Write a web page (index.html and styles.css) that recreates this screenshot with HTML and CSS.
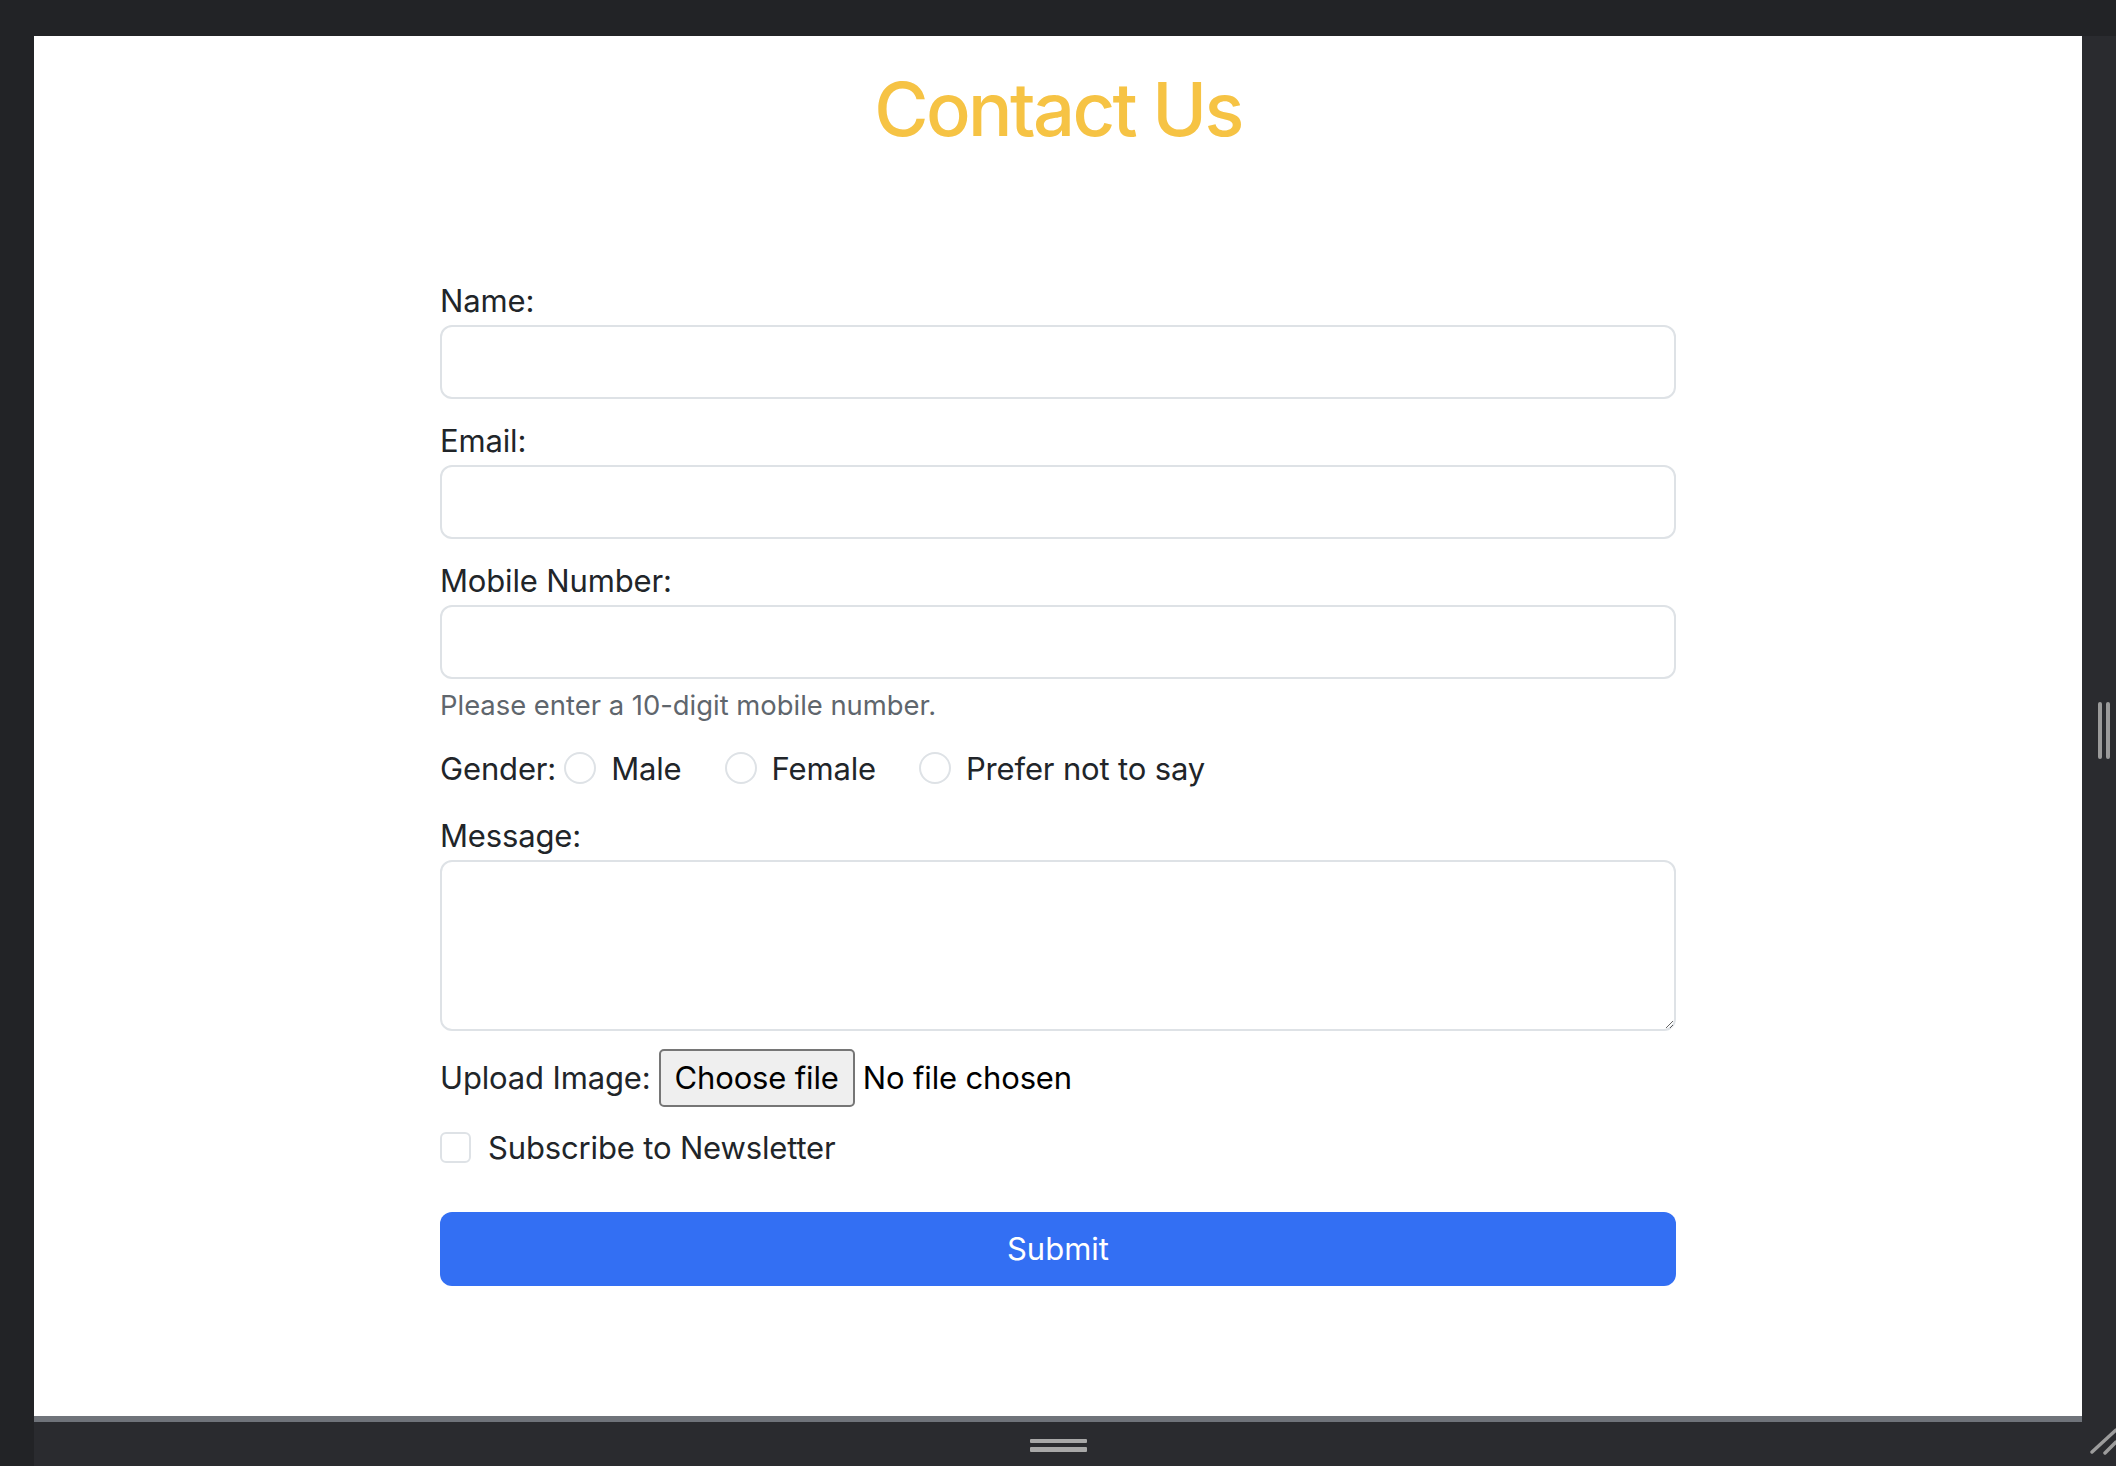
FILE: index.html
```html
<!DOCTYPE html>
<html lang="en">
<head>
<meta charset="utf-8">
<title>Contact Us</title>
<link rel="stylesheet" href="styles.css">
</head>
<body>
<div class="window">
  <div class="topbar"></div>
  <div class="leftbar"></div>
  <main class="page">
    <h1 class="title">Contact Us</h1>
    <form class="form">
      <div class="group">
        <label class="label" for="name">Name:</label>
        <input class="control" id="name" type="text">
      </div>
      <div class="group">
        <label class="label" for="email">Email:</label>
        <input class="control" id="email" type="email">
      </div>
      <div class="group group-help">
        <label class="label" for="mobile">Mobile Number:</label>
        <input class="control" id="mobile" type="tel">
        <div class="help">Please enter a 10-digit mobile number.</div>
      </div>
      <div class="gender-row">
        <span class="inline-label">Gender:</span>
        <label class="radio-item"><input class="radio" type="radio" name="gender"><span>Male</span></label>
        <label class="radio-item"><input class="radio" type="radio" name="gender"><span>Female</span></label>
        <label class="radio-item"><input class="radio" type="radio" name="gender"><span>Prefer not to say</span></label>
      </div>
      <div class="group">
        <label class="label" for="message">Message:</label>
        <textarea class="control textarea" id="message"></textarea>
      </div>
      <div class="upload-row">
        <span class="inline-label">Upload Image:</span>
        <span class="file-btn">Choose file</span>
        <span class="file-status">No file chosen</span>
      </div>
      <label class="check-row"><input class="check" type="checkbox"><span>Subscribe to Newsletter</span></label>
      <button class="submit" type="button">Submit</button>
    </form>
  </main>
  <div class="rightbar"><span class="vgrip"></span><span class="vgrip"></span></div>
  <div class="grayline"></div>
  <div class="bottombar">
    <div class="hgrip"><span></span><span></span></div>
    <svg class="corner" width="26" height="34" viewBox="0 0 26 34"><path d="M2 24 L26 2 M15 25 L26 14" stroke="#9c9c9c" stroke-width="3.5" stroke-linecap="round" fill="none"/></svg>
  </div>
</div>
</body>
</html>
```
FILE: styles.css
```css
* { box-sizing: border-box; }
html, body { margin: 0; padding: 0; }
body {
  background: #222326;
  font-family: "Inter", "Noto Sans", "Liberation Sans", sans-serif;
  color: #212529;
}
.window {
  display: grid;
  grid-template-columns: 34px 1fr 34px;
  grid-template-rows: 36px 1380px 6px 44px;
  width: 2116px;
  height: 1466px;
}
.topbar { grid-column: 1 / -1; grid-row: 1; background: #222326; }
.leftbar { grid-column: 1; grid-row: 2 / -1; background: #222326; }
.page {
  grid-column: 2; grid-row: 2;
  background: #ffffff;
  padding-top: 28px;
  display: flex; flex-direction: column; align-items: center;
}
.rightbar {
  grid-column: 3; grid-row: 2 / 4;
  background: #2a2b2f;
  display: flex; align-items: center; justify-content: center;
  gap: 4px; padding-left: 10px; padding-top: 2px;
}
.vgrip { width: 4px; height: 57px; border-radius: 2px; background: #9a9a9a; }
.grayline { grid-column: 2; grid-row: 3; background: #6f737a; }
.bottombar {
  grid-column: 2 / 4; grid-row: 4;
  background: #2a2b2f;
  display: flex; align-items: center; position: relative;
}
.hgrip {
  flex: 1; display: flex; flex-direction: column; align-items: center; gap: 4px;
  padding-left: 0; padding-top: 2px;
}
.hgrip span { width: 57px; height: 4.5px; border-radius: 1px; background: #a8a8a8; }
.corner { flex: none; align-self: flex-end; margin-right: 0; margin-bottom: 4px; margin-left: 8px; }

.title {
  margin: 0;
  font-size: 74px;
  line-height: 91px;
  font-weight: 500;
  color: #f6c344;
  letter-spacing: -2.6px;
}
.form {
  width: 1236px;
  margin-top: 122px;
  display: flex; flex-direction: column;
  font-size: 31px;
  line-height: 47px;
  letter-spacing: -0.15px;
}
.group { display: flex; flex-direction: column; margin-bottom: 18px; }
.group-help { margin-bottom: 19px; }
.label { display: block; margin-bottom: 1px; }
.control {
  display: block; width: 100%;
  height: 74px;
  border: 2px solid #dee2e6;
  border-radius: 12px;
  background: #fff;
  font: inherit;
  padding: 0 23px;
  outline: none;
}
.textarea { height: 171px; resize: vertical; padding: 12px 23px; }
.help {
  margin-top: 6px;
  font-size: 27.4px;
  line-height: 40.5px;
  letter-spacing: 0;
  color: #5f666d;
}
.gender-row {
  display: flex; align-items: center;
  height: 47px; margin-bottom: 20px;
}
.inline-label { margin-right: 8px; }
.radio-item { display: flex; align-items: center; margin-right: 43px; }
.radio {
  appearance: none; -webkit-appearance: none;
  width: 32px; height: 32px; margin: 0 15px 0 0;
  border: 2px solid #dee2e6; border-radius: 50%; background: #fff;
}
.upload-row { display: flex; align-items: center; height: 58px; margin-bottom: 17px; }
.upload-row .inline-label { margin-right: 8px; }
.file-btn {
  display: flex; align-items: center;
  height: 58px; padding: 0 14px;
  background: #efefef; border: 2px solid #767676; border-radius: 5px;
  color: #000;
}
.file-status { margin-left: 8px; color: #000; }
.check-row { display: flex; align-items: center; height: 47px; margin-bottom: 41px; }
.check {
  appearance: none; -webkit-appearance: none;
  width: 31px; height: 31px; margin: 0 17px 0 0;
  border: 2px solid #dee2e6; border-radius: 6px; background: #fff;
}
.submit {
  height: 74px; width: 100%;
  border: none; border-radius: 12px;
  background: #336ff3; color: #fff;
  font: inherit; font-size: 31px;
}
```
